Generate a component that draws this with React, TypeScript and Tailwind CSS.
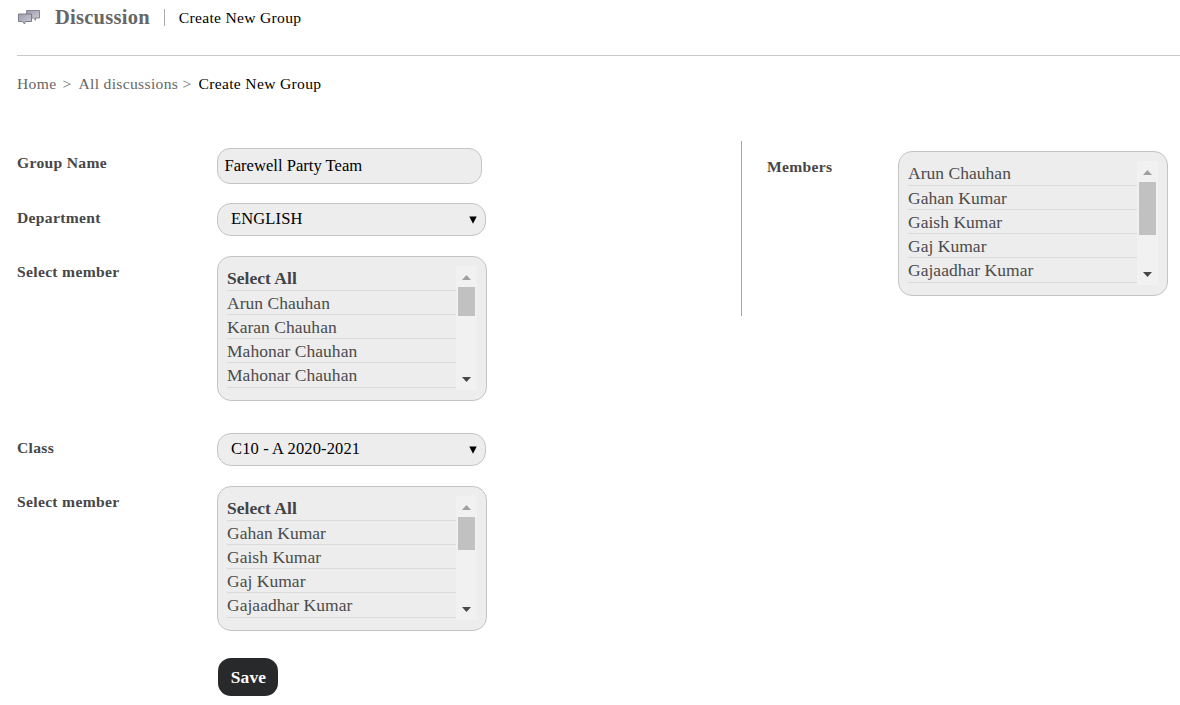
import React from "react";

function ChatIcon() {
  return (
    <svg width="24" height="18" viewBox="0 0 24 18" className="block shrink-0">
      <defs>
        <linearGradient id="bubble" x1="0" y1="0" x2="1" y2="1">
          <stop offset="0" stopColor="#9c9cab" />
          <stop offset="1" stopColor="#cdcdda" />
        </linearGradient>
      </defs>
      <path d="M9.5 3.5h13v7.5h-4v2.2l-2.2-2.2h-6.8z" fill="url(#bubble)" stroke="#85858f" />
      <path d="M1.5 7h13v7.5h-6.2l-0.8 2.5l-2-2.5h-4z" fill="url(#bubble)" stroke="#7b7b86" />
    </svg>
  );
}

function Label({ children }: { children: React.ReactNode }) {
  return (
    <div className="w-[200px] shrink-0 text-[15.6px] leading-5 font-bold tracking-[0.32px] text-[#474747]">{children}</div>
  );
}

function SelectBox({ value }: { value: string }) {
  return (
    <div className="flex h-[33px] w-[269px] items-center justify-between rounded-[14px] border border-[#c4c4c4] bg-[#ededed] pr-2 pb-0.5 pl-[13px] text-[16.5px] leading-5 tracking-[0.13px] text-black">
      <span>{value}</span>
      <svg width="8" height="8" viewBox="0 0 8 8" className="relative top-px">
        <path d="M0.3 0.5h7.4L4 7.8z" fill="#000" />
      </svg>
    </div>
  );
}

function ListBox({ items, thumb }: { items: string[]; thumb: string }) {
  return (
    <div className="flex h-[145px] w-[270px] shrink-0 rounded-[14px] border border-[#c4c4c4] bg-[#ededed] pt-[9px] pr-[9px] pl-[9px]">
      <ul className="w-[229px] text-[17.5px] leading-6 tracking-[0.03px] text-[#4b4b4b]">
        {items.map((name, i) => (
          <li
            key={i}
            className={`border-b border-[#dadada] ${i === 0 || i === 4 ? "h-[25px]" : "h-6"} ${name === "Select All" ? "font-bold text-[#444]" : ""}`}
          >
            {name}
          </li>
        ))}
      </ul>
      <div className="flex h-[124px] w-[21px] flex-col items-center bg-[#f1f1f1]">
        <svg width="9" height="5" viewBox="0 0 9 5" className="mt-[9px] shrink-0">
          <path d="M0 5L4.5 0L9 5z" fill="#a0a0a0" />
        </svg>
        <div className={`mt-[7px] w-[17px] shrink-0 bg-[#c1c1c1] ${thumb}`} />
        <svg width="9" height="5" viewBox="0 0 9 5" className="mt-auto mb-2 shrink-0">
          <path d="M0 0h9L4.5 5z" fill="#484848" />
        </svg>
      </div>
    </div>
  );
}

export default function App() {
  return (
    <div className="h-[705px] w-[1180px] overflow-hidden bg-white pl-[17px] font-['Liberation_Serif',serif]">
      <header className="flex h-14 items-start border-b border-[#c9c9c9] pt-[7px]">
        <ChatIcon />
        <h1 className="ml-3.5 -mt-px text-[20.5px] leading-[22px] font-bold tracking-[0.25px] text-[#666]">Discussion</h1>
        <div className="mt-0.5 ml-3.5 h-[17px] w-px bg-[#aaa]" />
        <span className="ml-3.5 pt-px text-[15.6px] leading-5 tracking-[0.3px] text-black">Create New Group</span>
      </header>
      <nav className="flex pt-[18px] text-[15.6px] leading-5 tracking-[0.32px] text-[#666]">
        <span className="w-[45.5px]">Home</span>
        <span className="w-4">&gt;</span>
        <span className="w-[104px]">All discussions</span>
        <span className="w-4">&gt;</span>
        <span className="text-black">Create New Group</span>
      </nav>
      <main className="flex pt-[47px]">
        <form className="w-[724px] shrink-0 pt-[7px]">
          <div className="flex h-[55px]">
            <div className="pt-[5px]"><Label>Group Name</Label></div>
            <div className="h-9 w-[265px] rounded-[13px] border border-[#c4c4c4] bg-[#ededed] pt-[7px] pl-[6.5px] text-[16.6px] leading-5 text-black">
              Farewell Party Team
            </div>
          </div>
          <div className="flex h-[53px]">
            <div className="pt-[5px]"><Label>Department</Label></div>
            <SelectBox value="ENGLISH" />
          </div>
          <div className="flex h-[177px]">
            <div className="pt-1.5"><Label>Select member</Label></div>
            <ListBox items={["Select All", "Arun Chauhan", "Karan Chauhan", "Mahonar Chauhan", "Mahonar Chauhan"]} thumb="h-[29px]" />
          </div>
          <div className="flex h-[53px]">
            <div className="pt-[5px]"><Label>Class</Label></div>
            <SelectBox value="C10 - A 2020-2021" />
          </div>
          <div className="flex h-[172px]">
            <div className="pt-1.5"><Label>Select member</Label></div>
            <ListBox items={["Select All", "Gahan Kumar", "Gaish Kumar", "Gaj Kumar", "Gajaadhar Kumar"]} thumb="h-[33px]" />
          </div>
          <button type="button" className="ml-[201px] block h-[38px] w-[60px] rounded-[13px] bg-[#28292b] pl-px text-[17.4px] leading-5 font-bold tracking-[0.2px] text-white">
            Save
          </button>
        </form>
        <section className="flex h-[175px] border-l border-[#a5a5a5] pt-2.5 pl-[25px]">
          <div className="w-[131px] shrink-0 pt-1.5 text-[15.6px] leading-5 font-bold tracking-[0.32px] text-[#474747]">Members</div>
          <ListBox items={["Arun Chauhan", "Gahan Kumar", "Gaish Kumar", "Gaj Kumar", "Gajaadhar Kumar"]} thumb="h-[53px]" />
        </section>
      </main>
    </div>
  );
}
